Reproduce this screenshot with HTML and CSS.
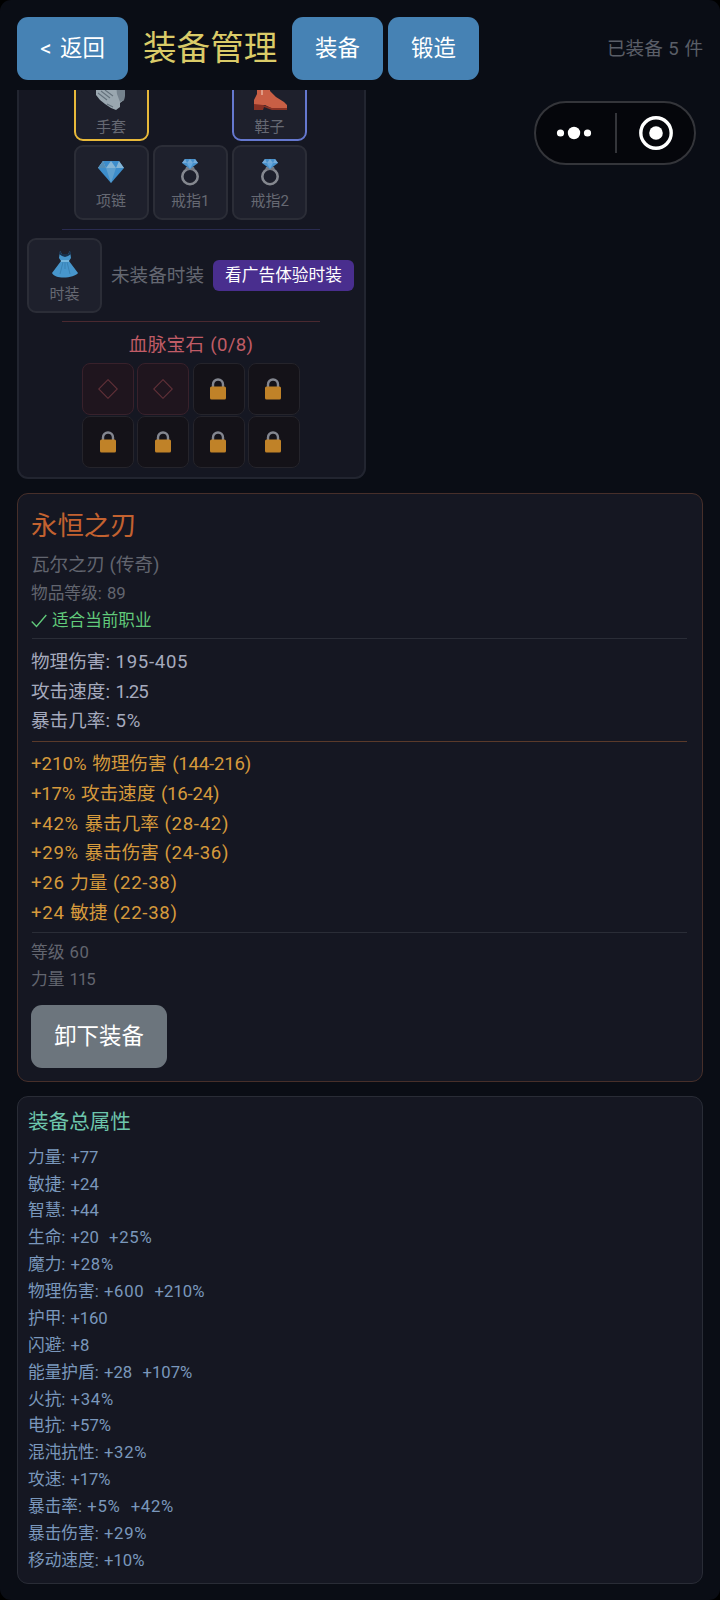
FILE: index.html
```html
<!DOCTYPE html>
<html lang="zh-CN">
<head>
<meta charset="utf-8">
<title>装备管理</title>
<link rel="stylesheet" href="styles.css">
</head>
<body>
<svg class="defs" aria-hidden="true">
  <symbol id="ring" viewBox="0 0 20 28">
    <circle cx="10" cy="18.5" r="7.7" fill="none" stroke="#85888f" stroke-width="2.6"/>
    <path d="M6 9h8l1 3H5z" fill="#777b84"/>
    <path d="M5 1h10l3 4-8 6-8-6z" fill="#4790cb"/>
    <path d="M5 1l2 4 3-4 3 4 2-4 3 4H2z" fill="#76abd8"/>
    <path d="M7 5h6l-3 6z" fill="#65a6dc"/>
  </symbol>
  <symbol id="lock" viewBox="0 0 18 22">
    <path d="M4 10V6.5a5 5 0 0 1 10 0V10" fill="none" stroke="#83868f" stroke-width="2.4"/>
    <rect x="1" y="8.5" width="16" height="13" rx="1.5" fill="#c08228"/>
  </symbol>
</svg>
<div class="screen">
  <header class="topbar">
    <button class="btn back">&lt; 返回</button>
    <h1>装备管理</h1>
    <button class="btn">装备</button>
    <button class="btn forge">锻造</button>
    <span class="count">已装备 5 件</span>
  </header>
  <main>
    <section class="card equipment">
      <div class="slots">
        <div class="slot gold">
          <svg class="glove" width="32" height="32" viewBox="0 0 32 32"><path d="M1 6h28l1 10-1 6-4 3v4l-4 3-5-2-6-4-5-4-4-5z" fill="#9aa7b0"/><path d="M21 6h8l1 10-1 6-4 2-3-8z" fill="#75828d"/><path d="M3 15l9 7M6 13l9 7M10 12l8 6M12 26l6 3" stroke="#65727d" stroke-width="1.1"/></svg>
          <span>手套</span>
        </div>
        <div class="slot blue">
          <svg class="boot" width="34" height="32" viewBox="0 0 34 32"><path d="M4 0h13v13l6 6 8 5 3 3v4H20l-8-4-11 1V22l3-6z" fill="#c95f45"/><path d="M1 26l9 1 9 3h15v2H19l-8-3-1 3H1z" fill="#873124"/><path d="M9 12v5" stroke="#e2a18b" stroke-width="1.8"/></svg>
          <span>鞋子</span>
        </div>
        <div class="slot">
          <svg width="26" height="28" viewBox="0 0 26 28"><path d="M5 3h16l5 7-13 15L0 10z" fill="#3d8dcb"/><path d="M5 3l3 7 5-7 5 7 3-7 5 7H0z" fill="#86b5d4"/><path d="M8 10h10l-5 15z" fill="#5e9fce"/><path d="M5 3L0 10h8z" fill="#538eb7"/></svg>
          <span>项链</span>
        </div>
        <div class="slot"><svg width="20" height="28"><use href="#ring"/></svg><span>戒指1</span></div>
        <div class="slot"><svg width="20" height="28"><use href="#ring"/></svg><span>戒指2</span></div>
      </div>
      <hr class="short violet">
      <div class="fashion">
        <div class="slot">
          <svg width="26" height="28" viewBox="0 0 26 28"><path d="M8 0l2 3h6l2-3 1 7-2 3 9 12c-3 5-23 7-26 0L9 10 7 7z" fill="#4796cc"/><path d="M8 0l2 3h6l2-3 1 3-3 2-3 1-3-1-3-2z" fill="#17304c"/><path d="M9 9h8v2H9z" fill="#75b5dc"/><path d="M11 11l-3 12M15 11l3 12M13 11v7" stroke="#367eae" stroke-width=".8"/></svg>
          <span>时装</span>
        </div>
        <span class="none">未装备时装</span>
        <button class="ad">看广告体验时装</button>
      </div>
      <hr class="short red">
      <h2 class="gem-title">血脉宝石 (0/8)</h2>
      <div class="gems">
        <div class="gem open"><svg width="20" height="20" viewBox="0 0 20 20"><path d="M10 .7l9.3 9.3-9.3 9.3L.7 10z"/></svg></div>
        <div class="gem open"><svg width="20" height="20" viewBox="0 0 20 20"><path d="M10 .7l9.3 9.3-9.3 9.3L.7 10z"/></svg></div>
        <div class="gem"><svg width="18" height="22"><use href="#lock"/></svg></div>
        <div class="gem"><svg width="18" height="22"><use href="#lock"/></svg></div>
        <div class="gem"><svg width="18" height="22"><use href="#lock"/></svg></div>
        <div class="gem"><svg width="18" height="22"><use href="#lock"/></svg></div>
        <div class="gem"><svg width="18" height="22"><use href="#lock"/></svg></div>
        <div class="gem"><svg width="18" height="22"><use href="#lock"/></svg></div>
      </div>
    </section>

    <section class="card item">
      <h2>永恒之刃</h2>
      <p class="base">瓦尔之刃 (传奇)</p>
      <p class="level">物品等级: 89</p>
      <p class="fit"><svg width="16" height="14" viewBox="0 0 16 14"><path d="M.7 7.5l4.8 5L15.3 1"/></svg>适合当前职业</p>
      <hr>
      <div class="lines">
        <p>物理伤害: <b>195-405</b></p>
        <p>攻击速度: <b class="tighter">1.25</b></p>
        <p>暴击几率: <b>5%</b></p>
      </div>
      <hr class="orange">
      <div class="lines mods">
        <p>+210% 物理伤害 <b class="tight">(144-216)</b></p>
        <p><b class="tight">+17%</b> 攻击速度 <b class="tight">(16-24)</b></p>
        <p><b>+42%</b> 暴击几率 <b>(28-42)</b></p>
        <p><b>+29%</b> 暴击伤害 <b>(24-36)</b></p>
        <p><b>+26</b> 力量 <b>(22-38)</b></p>
        <p><b>+24</b> 敏捷 <b>(22-38)</b></p>
      </div>
      <hr>
      <div class="reqs">
        <p>等级 <b>60</b></p>
        <p>力量 <b class="tighter">115</b></p>
      </div>
      <button class="btn remove">卸下装备</button>
    </section>

    <section class="card totals">
      <h2>装备总属性</h2>
      <p>力量: <b class="tight">+77</b></p>
      <p>敏捷: +24</p>
      <p>智慧: +44</p>
      <p>生命: +20  <b>+25%</b></p>
      <p>魔力: <b>+28%</b></p>
      <p>物理伤害: <b>+600</b>  +210%</p>
      <p>护甲: <b class="tight">+160</b></p>
      <p>闪避: +8</p>
      <p>能量护盾: +28  +107%</p>
      <p>火抗: <b>+34%</b></p>
      <p>电抗: +57%</p>
      <p>混沌抗性: <b>+32%</b></p>
      <p>攻速: <b class="tight">+17%</b></p>
      <p>暴击率: <b>+5%</b>  <b>+42%</b></p>
      <p>暴击伤害: <b>+29%</b></p>
      <p>移动速度: +10%</p>
    </section>
  </main>
  <div class="capsule">
    <svg width="36" height="14" viewBox="0 0 36 14"><circle cx="4.5" cy="7" r="3.6"/><circle cx="18" cy="7" r="6.2"/><circle cx="31.5" cy="7" r="3.6"/></svg>
    <i></i>
    <svg width="34" height="34" viewBox="0 0 34 34"><circle cx="17" cy="17" r="15.2" fill="none" stroke="#fff" stroke-width="3.4"/><circle cx="17" cy="17" r="6.8"/></svg>
  </div>
</div>
</body>
</html>
```
FILE: styles.css
```css
* { box-sizing: border-box; }
body { margin: 0; background: #000; font-family: Roboto, "Noto Sans CJK SC", sans-serif; }
h1, h2, p { margin: 0; font-weight: 400; white-space: pre; }
b { font-weight: 400; letter-spacing: .7px; }
b.tight { letter-spacing: -.2px; }
b.tighter { letter-spacing: -1px; }
button { font: inherit; border: 0; padding: 0; }
svg { display: block; flex: none; }
.defs { position: absolute; width: 0; height: 0; }
.screen { position: relative; height: 1600px; overflow: hidden; border-radius: 11px; background: #0a0d15; }

.topbar { display: flex; align-items: center; height: 90px; padding: 6px 17px 0; }
.btn { height: 63px; width: 91px; border-radius: 11px; background: #4682b4; color: #fff; font-size: 22.4px; line-height: 63px; text-align: center; }
.back { width: 111px; word-spacing: 3px; }
.forge { margin-left: 5px; }
h1 { width: 164px; padding: 2px 0 0 15px; color: #dacb68; font-size: 33.6px; line-height: 60px; }
.count { margin-left: auto; padding-bottom: 4px; color: #5a5e67; font-size: 18.6px; word-spacing: 1px; white-space: nowrap; }

main { display: flex; flex-direction: column; gap: 14px; padding: 0 17px; }
.card { border: 1px solid #292c36; border-radius: 11px; background: #151722; }

.equipment { width: 349px; height: 389px; padding: 0 9px 0 8px; border-radius: 0 0 11px 11px; border-width: 0 2px 2px; border-color: #222530; overflow: hidden; }
.slots { display: grid; grid-template-columns: repeat(3, 75px); gap: 4.3px; margin: -24px 0 0 46.5px; }
.slot { display: flex; flex-direction: column; align-items: center; width: 75px; height: 75px; padding-top: 11px; border: 2px solid #2b2d37; border-radius: 9px; background: #1e202c; color: #666973; font-size: 15px; }
.slot span { margin-top: 4px; line-height: 22px; white-space: nowrap; }
.slot.gold { border-color: #e8b93a; }
.slot.blue { grid-column: 3; border-color: #6578cf; }
.glove, .boot { margin-top: -1px; }
.slot.gold span, .slot.blue span { margin-top: 6px; }
hr { height: 1px; margin: 0; border: 0; background: #2a2d37; }
.short { width: 258px; margin-left: 35px; }
.violet { margin-top: 8.5px; background: #292b50; }
.fashion { display: flex; align-items: center; margin-top: 8px; }
.none { margin-left: 9px; width: 102px; color: #646771; font-size: 18.6px; line-height: 26px; padding-top: 1px; white-space: nowrap; }
.ad { width: 141px; height: 31px; border-radius: 6px; background: #492e8e; color: #fff; font-size: 16.7px; line-height: 32px; white-space: nowrap; }
.red { margin-top: 8px; background: #4a2930; }
.gem-title { margin-top: 9px; color: #c05c66; font-size: 18.6px; line-height: 28px; letter-spacing: .3px; word-spacing: 1px; text-align: center; }
.gems { display: grid; grid-template-columns: repeat(4, 52px); gap: 1px 3.3px; margin: 4px 0 0 55px; }
.gem { display: flex; align-items: center; justify-content: center; height: 52px; padding: 1px 1px 0 0; border: 1.5px solid #25242b; border-radius: 8px; background: #141218; }
.gem.open { padding: 0; border-color: #38212b; background: #1f151e; }
.gem path { fill: none; }
.gem.open path { stroke: #613038; stroke-width: 1.1; }

.item { height: 589px; padding: 14px 15px 0 13px; border-color: #472f2a; color: #62656f; }
.item h2 { color: #c36230; font-size: 26.4px; line-height: 36px; }
.base { margin-top: 6px; font-size: 18.5px; line-height: 30px; }
.level { font-size: 16.7px; line-height: 27px; word-spacing: 1px; }
.fit { display: flex; align-items: center; gap: 5px; color: #61cb7b; font-size: 16.6px; line-height: 27px; }
.fit path { fill: none; stroke: #61cb7b; stroke-width: 1.3; }
.item hr { margin: 4px 0 0 1px; }
.lines { margin-top: 9px; color: #a5aabd; font-size: 18.6px; word-spacing: 1px; }
.lines p { line-height: 29.7px; }
.item hr.orange { margin-top: 4px; background: #5a3a2a; }
.mods { margin-top: 8px; color: #d69a3c; }
.item .mods + hr { margin-top: 4px; }
.reqs { margin-top: 5.5px; font-size: 16.7px; word-spacing: 1px; }
.reqs p { line-height: 27.2px; }
.remove { width: 136px; margin-top: 12px; background: #6c757d; }

.totals { height: 488px; padding: 9px 11px 0 10px; color: #7a97bc; font-size: 16.7px; word-spacing: 1px; }
.totals h2 { margin-bottom: 6.7px; color: #6dc5ac; font-size: 20.6px; line-height: 32px; }
.totals p { line-height: 26.87px; }

/* floating host-app menu */
.capsule { position: absolute; left: 534px; top: 101px; width: 162px; height: 64px; display: flex; align-items: center; justify-content: space-between; padding: 0 21px 0 20px; border: 2px solid #34353a; border-radius: 32px; background: #05060b; }
.capsule svg { fill: #fff; }
.capsule i { width: 2px; height: 40px; background: #34353a; }
```
